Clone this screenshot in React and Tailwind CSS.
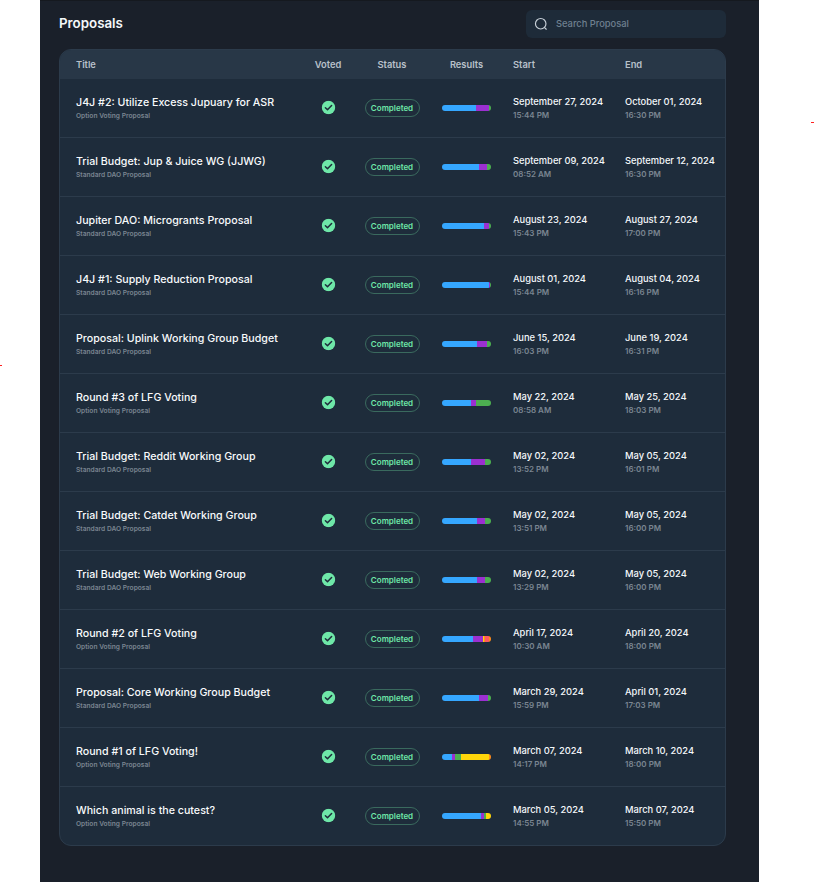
import React from "react";

const B = "#35a7ff", P = "#9b30d0", G = "#4caf50", Y = "#ffd60a", R = "#ff5a5f", O = "#ff8c1a";

const rows = [
  ["J4J #2: Utilize Excess Jupuary for ASR", "Option Voting Proposal", "September 27, 2024", "15:44 PM", "October 01, 2024", "16:30 PM", [[B, 34], [P, 13.3], [G, 1.7]]],
  ["Trial Budget: Jup & Juice WG (JJWG)", "Standard DAO Proposal", "September 09, 2024", "08:52 AM", "September 12, 2024", "16:30 PM", [[B, 37], [P, 8], [G, 4]]],
  ["Jupiter DAO: Microgrants Proposal", "Standard DAO Proposal", "August 23, 2024", "15:43 PM", "August 27, 2024", "17:00 PM", [[B, 42], [P, 5], [G, 2]]],
  ["J4J #1: Supply Reduction Proposal", "Standard DAO Proposal", "August 01, 2024", "15:44 PM", "August 04, 2024", "16:16 PM", [[B, 47], [P, 0.5], [G, 1.5]]],
  ["Proposal: Uplink Working Group Budget", "Standard DAO Proposal", "June 15, 2024", "16:03 PM", "June 19, 2024", "16:31 PM", [[B, 35], [P, 10], [G, 4]]],
  ["Round #3 of LFG Voting", "Option Voting Proposal", "May 22, 2024", "08:58 AM", "May 25, 2024", "18:03 PM", [[B, 29], [P, 5], [G, 15]]],
  ["Trial Budget: Reddit Working Group", "Standard DAO Proposal", "May 02, 2024", "13:52 PM", "May 05, 2024", "16:01 PM", [[B, 29], [P, 14], [G, 6]]],
  ["Trial Budget: Catdet Working Group", "Standard DAO Proposal", "May 02, 2024", "13:51 PM", "May 05, 2024", "16:00 PM", [[B, 35], [P, 8], [G, 6]]],
  ["Trial Budget: Web Working Group", "Standard DAO Proposal", "May 02, 2024", "13:29 PM", "May 05, 2024", "16:00 PM", [[B, 35], [P, 8], [G, 6]]],
  ["Round #2 of LFG Voting", "Option Voting Proposal", "April 17, 2024", "10:30 AM", "April 20, 2024", "18:00 PM", [[B, 31], [P, 10], [Y, 1], [O, 1], [R, 4], [O, 2]]],
  ["Proposal: Core Working Group Budget", "Standard DAO Proposal", "March 29, 2024", "15:59 PM", "April 01, 2024", "17:03 PM", [[B, 37], [P, 9], [G, 3]]],
  ["Round #1 of LFG Voting!", "Option Voting Proposal", "March 07, 2024", "14:17 PM", "March 10, 2024", "18:00 PM", [[B, 10], [P, 3], [G, 6], [Y, 28], [O, 2]]],
  ["Which animal is the cutest?", "Option Voting Proposal", "March 05, 2024", "14:55 PM", "March 07, 2024", "15:50 PM", [[B, 39], [P, 3], [G, 2], [Y, 5]]],
];

const cols = "grid grid-cols-[224px_56px_72px_77px_112px_1fr] pl-4 items-center";

function Check() {
  return (
    <svg width="14" height="14" viewBox="0 0 14 14" className="block translate-x-[0.5px] -translate-y-[0.5px]">
      <circle cx="7" cy="7" r="6.7" fill="#6ee7a8" />
      <path d="M3.9 7.2 6 9.3 10.1 5" fill="none" stroke="#1e2c3b" strokeWidth="1.5" strokeLinecap="round" strokeLinejoin="round" />
    </svg>
  );
}

function Bar({ parts }) {
  return (
    <div className="flex h-[6px] w-[49px] overflow-hidden rounded-full">
      {parts.map(([c, w], i) => (
        <div key={i} className="h-full shrink-0" style={{ width: w, background: c }} />
      ))}
    </div>
  );
}

function DateCell({ date, time }) {
  return (
    <div className="pl-2 flex flex-col">
      <div className="text-[9.33px] leading-[14px] font-medium text-[#f4f7fa] whitespace-nowrap">{date}</div>
      <div className="text-[8px] leading-[12px] font-semibold text-[#7a8591] whitespace-nowrap">{time}</div>
    </div>
  );
}

function Row({ r, last }) {
  return (
    <div className={`${cols} ${last ? "h-[58px]" : "h-[59px] border-b border-[#2c3b4b]"}`}>
      <div className="flex flex-col">
        <div className="text-[10.67px] leading-[16px] font-medium text-[#f8fafc] whitespace-nowrap">{r[0]}</div>
        <div className="text-[6.67px] leading-[10px] font-semibold text-[#7a8591] whitespace-nowrap">{r[1]}</div>
      </div>
      <div className="flex justify-center"><Check /></div>
      <div className="flex justify-center">
        <span className="flex items-center justify-center w-[55px] h-[18px] rounded-full border border-[#3a6a5e] text-[8px] font-semibold text-[#6ee7a8]">Completed</span>
      </div>
      <div className="flex justify-center"><Bar parts={r[6]} /></div>
      <DateCell date={r[2]} time={r[3]} />
      <DateCell date={r[4]} time={r[5]} />
    </div>
  );
}

export default function App() {
  return (
    <div className="relative w-[814px] h-[882px] bg-white overflow-hidden font-['Inter',sans-serif]">
      <div className="absolute left-[811px] top-[122px] w-[3px] h-[1px] bg-[#ff2020]" />
      <div className="absolute left-0 top-[365px] w-[2px] h-[1px] bg-[#ff2020]" />
      <div className="ml-10 w-[719px] h-full bg-[#1a202a] border-t border-[#15191f] px-[19px]">
        <div className="flex items-center justify-between w-[667px] h-[48px] pb-[3px]">
          <h1 className="text-[13.33px] font-semibold text-[#f4f7fa]">Proposals</h1>
          <div className="flex items-center w-[200px] h-[28px] rounded-md bg-[#1e2b39] pl-[8px] gap-[8px]">
            <svg width="14" height="14" viewBox="0 0 24 24" fill="none" stroke="#c8d0d8" strokeWidth="2" strokeLinecap="round" strokeLinejoin="round">
              <circle cx="11.5" cy="11.5" r="9" />
              <path d="m21 21-2.8-2.8" />
            </svg>
            <span className="text-[9.33px] font-medium text-[#6f8090]">Search Proposal</span>
          </div>
        </div>
        <div className="w-[667px] rounded-xl border border-[#2c3b4b] bg-[#1e2c3b] overflow-hidden">
          <div className={`${cols} h-[29px] pt-[1px] bg-[#283747] text-[9.33px] font-semibold text-[#b8c0ca]`}>
            <div>Title</div>
            <div className="text-center">Voted</div>
            <div className="text-center">Status</div>
            <div className="text-center">Results</div>
            <div className="pl-2">Start</div>
            <div className="pl-2">End</div>
          </div>
          {rows.map((r, i) => (
            <Row key={i} r={r} last={i === rows.length - 1} />
          ))}
        </div>
      </div>
    </div>
  );
}
